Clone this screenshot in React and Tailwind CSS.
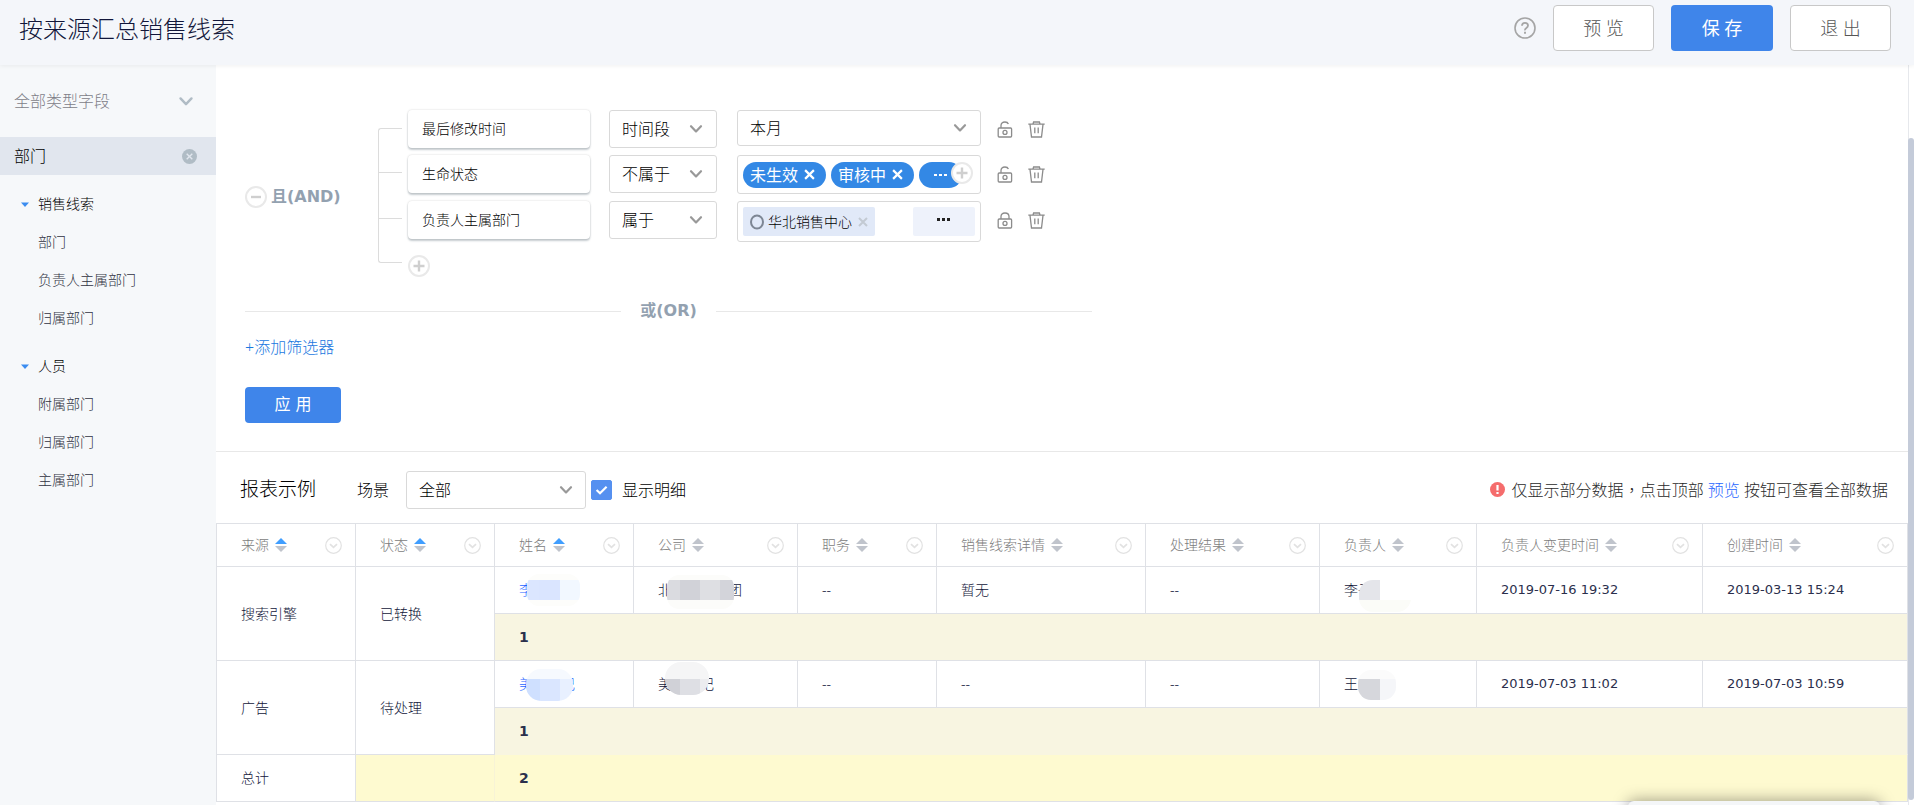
import { useState } from "react";

const NUM_FONT = "font-['DejaVu_Sans','Noto_Sans_CJK_SC',sans-serif]";

const FIELD_GROUPS = [
  { name: "销售线索", fields: ["部门", "负责人主属部门", "归属部门"] },
  { name: "人员", fields: ["附属部门", "归属部门", "主属部门"] },
];

const COLUMNS = [
  { label: "来源", width: 139, sorted: true },
  { label: "状态", width: 139, sorted: true },
  { label: "姓名", width: 139, sorted: true },
  { label: "公司", width: 164 },
  { label: "职务", width: 139 },
  { label: "销售线索详情", width: 209 },
  { label: "处理结果", width: 174 },
  { label: "负责人", width: 157 },
  { label: "负责人变更时间", width: 226 },
  { label: "创建时间", width: 205 },
];

// 脱敏字段: head / tail 为可见文字, blocks 为马赛克色块 [x, y, w, h, color]
const GROUPS = [
  {
    source: "搜索引擎",
    status: "已转换",
    count: 1,
    name: {
      head: "李",
      link: true,
      clip: { x: 8, y: -2, w: 53, h: 32, r: 12 },
      blocks: [
        [8, -2, 53, 32, "#fdfdfb"],
        [8, 4, 14, 20, "#dbe6ff"],
        [20, 4, 21, 20, "#dae5ff"],
        [41, 4, 20, 20, "#f2f8ff"],
      ],
    },
    company: {
      head: "北",
      gap: true,
      tail: "团",
      clip: { x: 9, y: -1, w: 67, h: 34, r: 12 },
      blocks: [
        [9, -1, 67, 34, "#fcfcfa"],
        [9, 4, 13, 20, "#dadbe0"],
        [22, 4, 20, 20, "#d1d2d8"],
        [42, 4, 20, 20, "#dedfe3"],
        [62, 4, 14, 20, "#d3d4da"],
      ],
    },
    detail: "暂无",
    owner: {
      head: "李子",
      clip: { x: 15, y: 4, w: 52, h: 32, r: 14 },
      blocks: [
        [15, 4, 21, 20, "#e4e5ea"],
        [36, 4, 31, 20, "#ffffff"],
        [15, 24, 52, 12, "#fbfcf8"],
      ],
    },
    changedAt: "2019-07-16 19:32",
    createdAt: "2019-03-13 15:24",
  },
  {
    source: "广告",
    status: "待处理",
    count: 1,
    name: {
      head: "美",
      shortGap: true,
      tail: "记",
      link: true,
      clip: { x: 7, y: -1, w: 47, h: 32, r: 15 },
      blocks: [
        [7, -1, 47, 10, "#f6f9fe"],
        [7, 9, 14, 22, "#cfe0ff"],
        [21, 9, 20, 22, "#dae6ff"],
        [41, 9, 13, 22, "#e8f0ff"],
      ],
    },
    company: {
      head: "美",
      shortGap: true,
      tail: "记",
      clip: { x: 7, y: -8, w: 44, h: 33, r: 16 },
      blocks: [
        [7, -8, 44, 17, "#f5f5f6"],
        [7, 9, 15, 16, "#d0d1d7"],
        [22, 9, 20, 16, "#dedfe4"],
        [42, 9, 9, 16, "#ececef"],
      ],
    },
    detail: "--",
    owner: {
      head: "王",
      clip: { x: 14, y: 0, w: 38, h: 30, r: 13 },
      blocks: [
        [14, 0, 38, 9, "#fbfbfb"],
        [14, 9, 22, 21, "#d6d7dc"],
        [36, 9, 16, 21, "#f5f6f9"],
      ],
    },
    changedAt: "2019-07-03 11:02",
    createdAt: "2019-07-03 10:59",
  },
];

function Chevron({ className }) {
  return (
    <svg className={className} width="14" height="10" viewBox="0 0 14 10" fill="none" stroke="currentColor" strokeWidth="2.2" strokeLinecap="round" strokeLinejoin="round" aria-hidden="true">
      <path d="M2 2.2 7 7.4 12 2.2" />
    </svg>
  );
}

function CircleButton({ label, minus, className = "" }) {
  return (
    <button type="button" aria-label={label} className={`flex size-[22px] shrink-0 items-center justify-center rounded-full border-2 border-[#e9e9e9] bg-white text-[#cfcfcf] ${className}`}>
      <svg width="14" height="14" viewBox="0 0 14 14" stroke="currentColor" strokeWidth="2.4">
        <path d={minus ? "M2 7H12" : "M1.5 7H12.5M7 1.5V12.5"} />
      </svg>
    </button>
  );
}

function LockIcon({ locked }) {
  return (
    <svg width="16" height="17" viewBox="0 0 16 17" fill="none" stroke="currentColor" strokeWidth="1.3">
      <rect x="1.2" y="7" width="13.4" height="9" rx="1" />
      <path d={locked ? "M4 7V4.6Q4 1 8 1T12 4.6V7" : "M4 7V4.6Q4 1 8 1Q10.6 1 11.4 3"} />
      <circle cx="8" cy="11.4" r="2" />
    </svg>
  );
}

function TrashIcon() {
  return (
    <svg width="17" height="17" viewBox="0 0 17 17" fill="none" stroke="currentColor" strokeWidth="1.3">
      <path d="M.3 3.2H16.7M5 3 5.6 1H11.4L12 3M2 3.4 3.5 16H13.5L15 3.4M6.8 6.6V12.2M10.2 6.6V12.2" />
    </svg>
  );
}

function CrossIcon({ className = "", size = 10 }) {
  return (
    <svg className={className} width={size} height={size} viewBox="0 0 10 10" stroke="currentColor" strokeWidth="2">
      <path d="M1 1 9 9M9 1 1 9" />
    </svg>
  );
}

function SelectBox({ label, options, className = "" }) {
  return (
    <div className={`relative shrink-0 ${className}`}>
      <select aria-label={label} className="h-full w-full appearance-none rounded-[3px] border border-[#d9d9d9] bg-white pl-3 pr-8 text-base font-light text-black">
        {options.map((o) => (
          <option key={o}>{o}</option>
        ))}
      </select>
      <Chevron className="pointer-events-none absolute top-1/2 right-[14px] -translate-y-1/2 text-[#999]" />
    </div>
  );
}

function FilterRow({ field, operator, locked, children }) {
  return (
    <div className="flex items-start">
      <div className="flex h-[38px] w-[182px] items-center rounded-[4px] bg-white px-[14px] text-sm font-light text-black shadow-[0_0_2px_rgba(0,0,0,0.18),0_2px_2px_rgba(120,135,145,0.4)]">
        {field}
      </div>
      <SelectBox label={`${field}条件`} options={[operator]} className="ml-[19px] h-[38px] w-[108px]" />
      <div className="ml-5 w-[244px]">{children}</div>
      <div className="ml-4 flex h-[38px] items-center gap-[15px] text-[#8c8c8c]">
        <button type="button" aria-label={locked ? "解锁" : "锁定"}>
          <LockIcon locked={locked} />
        </button>
        <button type="button" aria-label="删除">
          <TrashIcon />
        </button>
      </div>
    </div>
  );
}

function Pill({ children }) {
  return (
    <span className="flex h-[26px] items-center gap-[6px] rounded-full bg-[#3388e5] pr-[11px] pl-[7px] text-base text-white">
      {children}
      <button type="button" aria-label={`移除${children}`}>
        <CrossIcon className="h-[11px] w-[11px]" />
      </button>
    </span>
  );
}

function Sidebar() {
  return (
    <aside className="w-[216px] shrink-0 bg-[#f6f8fa]">
      <button type="button" className="flex h-[72px] w-full items-center justify-between pr-[22px] pl-[14px] text-base font-light text-[#7e7e88]">
        全部类型字段
        <Chevron className="h-[11px] w-4 text-[#b0bcc5]" />
      </button>
      <div className="flex h-[38px] items-center bg-[#e1e6ee] pr-[19px] pl-[14px]">
        <input aria-label="搜索字段" defaultValue="部门" className="min-w-0 flex-1 bg-transparent text-base font-light text-black outline-none" />
        <button type="button" aria-label="清空" className="flex size-[15px] items-center justify-center rounded-full bg-[#b0bcc5] text-[#e1e6ee]">
          <CrossIcon size={7} />
        </button>
      </div>
      <div className="flex flex-col gap-[10px] pt-[10px] text-sm font-light">
        {FIELD_GROUPS.map((g) => (
          <ul key={g.name}>
            <li className="flex h-[38px] items-center pl-[21px] text-black">
              <svg width="8" height="5" viewBox="0 0 8 5" fill="#3b8cf0" className="mr-[9px]">
                <path d="M0 .5H8L4 5Z" />
              </svg>
              {g.name}
            </li>
            {g.fields.map((f) => (
              <li key={f} className="flex h-[38px] items-center pl-[38px] text-[#303342]">
                {f}
              </li>
            ))}
          </ul>
        ))}
      </div>
    </aside>
  );
}

function Masked({ id, data }) {
  const { clip, blocks } = data;
  const Tag = data.link ? "a" : "span";
  return (
    <Tag href={data.link ? "#" : undefined} className={`relative flex h-7 items-center ${data.link ? "text-[#1f66ff]" : ""}`}>
      {data.head}
      {data.gap && <span className="w-14" />}
      {data.shortGap && <span className="w-7" />}
      {data.tail}
      <svg className="absolute top-0 left-0 overflow-visible" width="84" height="28" aria-hidden="true">
        <clipPath id={id}>
          <rect x={clip.x} y={clip.y} width={clip.w} height={clip.h} rx={clip.r} />
        </clipPath>
        <g clipPath={`url(#${id})`} shapeRendering="crispEdges">
          {blocks.map(([x, y, w, h, color], i) => (
            <rect key={i} x={x} y={y} width={w} height={h} fill={color} />
          ))}
        </g>
      </svg>
    </Tag>
  );
}

function HeaderCell({ column }) {
  return (
    <th scope="col" className="h-[43px] border-r border-b border-[#dfe1e6] p-0 pr-[13px] pl-6 font-light text-[#7c7c7c]">
      <div className="flex items-center">
        {column.label}
        <button type="button" aria-label={`按${column.label}排序`} className="ml-[6px]">
          <svg width="12" height="14" viewBox="0 0 12 14">
            <path d="M6 0 12 6H0Z" fill={column.sorted ? "#409eff" : "#c0c4cc"} />
            <path d="M0 8H12L6 14Z" fill="#c0c4cc" />
          </svg>
        </button>
        <button type="button" aria-label={`${column.label}菜单`} className="ml-auto">
          <svg width="17" height="17" viewBox="0 0 17 17" fill="none" stroke="#e2e2e2">
            <circle cx="8.5" cy="8.5" r="7.8" strokeWidth="1.2" />
            <path d="M5 7.2 8.5 10.4 12 7.2" strokeWidth="1.8" />
          </svg>
        </button>
      </div>
    </th>
  );
}

function Cell({ className = "", ...props }) {
  return <td className={`h-[47px] border-r border-b border-[#dfe1e6] p-0 pl-6 ${className}`} {...props} />;
}

function ReportTable() {
  return (
    <table className="w-full table-fixed border-separate border-spacing-0 border-t border-l border-[#dfe1e6] text-left text-sm font-light text-[#12163a]">
      <colgroup>
        {COLUMNS.map((c) => (
          <col key={c.label} style={{ width: c.width }} />
        ))}
      </colgroup>
      <thead>
        <tr>
          {COLUMNS.map((c) => (
            <HeaderCell key={c.label} column={c} />
          ))}
        </tr>
      </thead>
      {GROUPS.map((g, i) => (
        <tbody key={g.source}>
          <tr>
            <Cell rowSpan={2}>{g.source}</Cell>
            <Cell rowSpan={2}>{g.status}</Cell>
            <Cell><Masked id={`name-${i}`} data={g.name} /></Cell>
            <Cell><Masked id={`company-${i}`} data={g.company} /></Cell>
            <Cell>--</Cell>
            <Cell>{g.detail}</Cell>
            <Cell>--</Cell>
            <Cell><Masked id={`owner-${i}`} data={g.owner} /></Cell>
            <Cell className={`text-[13px] font-normal text-[#2b2f4c] ${NUM_FONT}`}>{g.changedAt}</Cell>
            <Cell className={`text-[13px] font-normal text-[#2b2f4c] ${NUM_FONT}`}>{g.createdAt}</Cell>
          </tr>
          <tr>
            <Cell
              colSpan={8}
              className={`bg-[#f8f5e1] font-bold text-[#2b2f4c] ${NUM_FONT} ${i === GROUPS.length - 1 ? "border-b-[#f8f5e1]" : ""}`}
            >
              {g.count}
            </Cell>
          </tr>
        </tbody>
      ))}
      <tfoot>
        <tr>
          <Cell>总计</Cell>
          <Cell className="border-r-[#f7f3d6] bg-[#fefad0]" />
          <Cell colSpan={8} className={`bg-[#fefad0] font-bold text-[#2b2f4c] ${NUM_FONT}`}>2</Cell>
        </tr>
      </tfoot>
    </table>
  );
}

export default function App() {
  const [showDetail, setShowDetail] = useState(true);

  return (
    <div className="relative flex h-screen flex-col overflow-hidden bg-white font-['Noto_Sans','Noto_Sans_CJK_SC',sans-serif]">
      <header className="relative z-10 flex h-[65px] shrink-0 items-start justify-between bg-[#f4f6fa] pr-[23px] pl-[19px] shadow-[0_1px_4px_rgba(0,0,0,0.06)]">
        <h1 className="pt-[13px] text-2xl font-light text-[#12163a]">按来源汇总销售线索</h1>
        <div className="flex items-center gap-[17px] pt-[5px] text-lg font-light">
          <button type="button" aria-label="帮助">
            <svg width="22" height="22" viewBox="0 0 22 22" fill="none" stroke="#a5a5a5" strokeWidth="1.6">
              <circle cx="11" cy="11" r="10" />
              <path d="M8 8.8Q8 5.8 11 5.8T14 8.5Q14 9.9 12.4 10.9T11 13.4" strokeWidth="1.8" />
              <path d="M11 14.8V16.8" strokeWidth="1.9" />
            </svg>
          </button>
          <button type="button" className="h-[46px] w-[101px] rounded-[4px] border border-[#c8c8c8] bg-white text-[#555]">预 览</button>
          <button type="button" className="h-[46px] w-[102px] rounded-[4px] bg-[#3f85ea] font-normal text-white">保 存</button>
          <button type="button" className="h-[46px] w-[101px] rounded-[4px] border border-[#c8c8c8] bg-white text-[#555]">退 出</button>
        </div>
      </header>

      <div className="flex min-h-0 flex-1">
        <Sidebar />
        <main className="min-w-0 flex-1 overflow-hidden">
          <section className="border-b border-[#e8e8e8] pt-[45px] pb-7 pl-[29px]">
            <div className="flex">
              <div className="mt-[18px] flex h-[138px] w-[133px] items-center gap-1 text-base font-bold text-[#93a1b0]">
                <CircleButton label="收起" minus />
                <span className={NUM_FONT}>且(AND)</span>
              </div>
              {/* 条件分支连线 */}
              <div className="mt-[18px] mr-[6px] h-[135px] w-6 rounded-l-[3px] border-y border-l border-[#dcdcdc]">
                <div className="h-[43px]" />
                <div className="h-[47px] border-y border-[#dcdcdc]" />
              </div>
              <div className="flex flex-col gap-[7px]">
                <FilterRow field="最后修改时间" operator="时间段">
                  <SelectBox label="时间范围" options={["本月"]} className="h-9" />
                </FilterRow>
                <FilterRow field="生命状态" operator="不属于">
                  <div className="flex h-[39px] items-center gap-[5px] rounded-[3px] border border-[#d9d9d9] px-[5px]">
                    <Pill>未生效</Pill>
                    <Pill>审核中</Pill>
                    <span className="flex h-[26px] w-[43px] items-center justify-center rounded-full bg-[#3388e5] text-white">
                      <svg width="14" height="4" fill="currentColor" aria-hidden="true">
                        <path d="M0 1H3V3H0ZM5 1H8V3H5ZM10 1H13V3H10Z" />
                      </svg>
                    </span>
                    <CircleButton label="添加状态" className="-ml-4 mb-1" />
                  </div>
                </FilterRow>
                <FilterRow field="负责人主属部门" operator="属于" locked>
                  <div className="flex h-[41px] items-center justify-between rounded-[3px] border border-[#d9d9d9] px-[5px]">
                    <span className="flex h-[29px] items-center gap-1 rounded-[2px] bg-[#e1e9f8] px-[7px] text-sm font-light text-black">
                      <svg width="14" height="16" viewBox="0 0 14 16" fill="none" stroke="#7d8694" strokeWidth="2">
                        <ellipse cx="7" cy="8" rx="6" ry="6.6" />
                      </svg>
                      华北销售中心
                      <button type="button" aria-label="移除华北销售中心" className="ml-[2px] text-[#c3cad3]">
                        <CrossIcon />
                      </button>
                    </span>
                    <button type="button" aria-label="更多" className="flex h-[29px] w-[62px] items-center justify-center rounded-[2px] bg-[#eef2fb] pb-1 text-[#222]">
                      <svg width="14" height="4" fill="currentColor">
                        <path d="M0 0H3V3H0ZM5 0H8V3H5ZM10 0H13V3H10Z" />
                      </svg>
                    </button>
                  </div>
                </FilterRow>
                <CircleButton label="添加条件" className="mt-[6px]" />
              </div>
            </div>

            <div className="mt-[22px] flex h-6 w-[847px] items-center gap-[19px]">
              <span className="h-px flex-1 bg-[#e8e8e8]" />
              <span className={`font-bold text-[#93a1b0] ${NUM_FONT}`}>或(OR)</span>
              <span className="h-px flex-1 bg-[#e8e8e8]" />
            </div>
            <a href="#" className="mt-3 block w-fit leading-6 font-light text-[#1a78e0]">+添加筛选器</a>
            <button type="button" className={`mt-7 h-9 w-24 rounded-[4px] bg-[#3f85ea] text-white ${NUM_FONT}`}>应 用</button>
          </section>

          <div className="flex h-[71px] items-center pt-1 pr-5 pl-6 text-base font-light text-black">
            <h2 className="text-[19px]">报表示例</h2>
            <label htmlFor="scene" className="ml-[41px]">场景</label>
            <div className="relative ml-[17px] h-[38px] w-[180px]">
              <select id="scene" className="h-full w-full appearance-none rounded-[3px] border border-[#d9d9d9] bg-white pl-3 font-light">
                <option>全部</option>
              </select>
              <Chevron className="pointer-events-none absolute top-1/2 right-[13px] -translate-y-1/2 text-[#999]" />
            </div>
            <label className="ml-[5px] flex items-center gap-[10px]">
              <span className="relative flex">
                <input
                  type="checkbox"
                  checked={showDetail}
                  onChange={(e) => setShowDetail(e.target.checked)}
                  className="h-5 w-[21px] appearance-none rounded-[2px] border border-[#5590f0] checked:bg-[#5590f0]"
                />
                {showDetail && (
                  <svg className="pointer-events-none absolute inset-0" width="21" height="20" viewBox="0 0 21 20" fill="none" stroke="#fff" strokeWidth="2.2">
                    <path d="M5.6 10 9 13.2 15.6 6.8" />
                  </svg>
                )}
              </span>
              显示明细
            </label>
            <p className="ml-auto flex items-center text-[#2a2a2a]">
              <svg width="15" height="15" viewBox="0 0 15 15" className="mr-[7px]" aria-hidden="true">
                <circle cx="7.5" cy="7.5" r="7.5" fill="#f56c6c" />
                <path d="M7.5 3V8.6M7.5 10V12" stroke="#fff" strokeWidth="2.2" />
              </svg>
              <span>
                仅显示部分数据<span className="font-['Noto_Sans_CJK_TC',sans-serif]">，</span>点击顶部 <a href="#" className="text-[#1f66ff]">预览</a> 按钮可查看全部数据
              </span>
            </p>
          </div>
          <ReportTable />
        </main>

        {/* 滚动条 */}
        <div className="w-[6px] shrink-0 border-l border-[#e6e8ec] pt-[73px] pb-[5px]">
          <div className="-ml-px h-full rounded-[3px] bg-[#c4cbd9]" />
        </div>
      </div>

      {/* 底部浮层 */}
      <div className="absolute right-[34px] -bottom-9 h-10 w-[252px] rounded-[6px] bg-[#f4f6f8] shadow-[0_0_16px_rgba(0,0,0,0.4)]" />
    </div>
  );
}
